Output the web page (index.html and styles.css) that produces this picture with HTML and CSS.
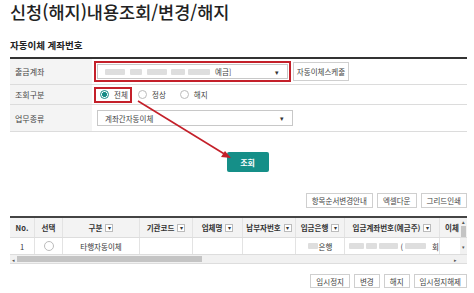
FILE: index.html
```html
<!DOCTYPE html>
<html lang="ko">
<head>
  <meta charset="UTF-8">
  <title>신청(해지)내용조회/변경/해지</title>
  <link rel="stylesheet" href="styles.css">
</head>
<body>
  <h1 class="title">신청(해지)내용조회/변경/해지</h1>
  <h2 class="sub">자동이체 계좌번호</h2>

  <div class="form">
    <div class="row r1">
      <div class="lbl">출금계좌</div>
      <div class="val">
        <div class="hl">
          <div class="sel wide">
            <span class="blur b1"></span><span class="blur b2"></span><span class="blur b3"></span><span class="blur b4"></span><span class="blur b5"></span>
            <span class="acc">예금]</span>
            <span class="caret">▾</span>
          </div>
        </div>
        <button class="btn">자동이체스케줄</button>
      </div>
    </div>
    <div class="row r2">
      <div class="lbl">조회구분</div>
      <div class="val">
        <label class="radio hl2"><span class="dot on"></span>전체</label>
        <label class="radio"><span class="dot"></span>정상</label>
        <label class="radio"><span class="dot"></span>해지</label>
      </div>
    </div>
    <div class="row r3">
      <div class="lbl">업무종류</div>
      <div class="val">
        <div class="sel mid">계좌간자동이체<span class="caret">▾</span></div>
      </div>
    </div>
  </div>

  <div class="search"><button class="go">조회</button></div>

  <div class="tools">
    <button class="btn">항목순서변경안내</button>
    <button class="btn">엑셀다운</button>
    <button class="btn">그리드인쇄</button>
  </div>

  <div class="grid">
    <div class="gh">
      <div>No.</div>
      <div>선택</div>
      <div>구분<i class="f">▾</i></div>
      <div>기관코드<i class="f">▾</i></div>
      <div>업체명<i class="f">▾</i></div>
      <div>납부자번호<i class="f">▾</i></div>
      <div>입금은행<i class="f">▾</i></div>
      <div>입금계좌번호(예금주)<i class="f">▾</i></div>
      <div class="cut">이체</div>
      <div class="vs top"><span>▴</span><b></b></div>
    </div>
    <div class="gr">
      <div>1</div>
      <div><span class="dot"></span></div>
      <div>타행자동이체</div>
      <div></div>
      <div></div>
      <div></div>
      <div><span class="blur sm"></span>은행</div>
      <div class="acct"><span class="blur w1"></span><span class="blur w2"></span><span class="blur w3"></span>(<span class="blur w4"></span>회</div>
      <div></div>
      <div class="vs"><span>▾</span></div>
    </div>
    <div class="hs">
      <span class="l">◂</span><div class="thumb"></div><span class="r">▸</span>
    </div>
  </div>

  <div class="tools bottom">
    <button class="btn">임시정지</button>
    <button class="btn">변경</button>
    <button class="btn">해지</button>
    <button class="btn">임시정지해제</button>
  </div>

  <svg class="arrow" width="474" height="293" viewBox="0 0 474 293">
    <line x1="138" y1="101" x2="226" y2="155" stroke="#c4202a" stroke-width="1.6"/>
    <polygon points="231,158 221,157 225,151" fill="#c4202a"/>
  </svg>
</body>
</html>
```

FILE: styles.css
```css
* { margin: 0; padding: 0; box-sizing: border-box; }
body {
  font-family: "Noto Sans CJK KR", "Noto Sans", sans-serif;
  color: #333;
  background: #fff;
  padding: 0 7px 0 10px;
  width: 474px;
  height: 293px;
  overflow: hidden;
  position: relative;
}
.title {
  font-size: 17.5px;
  font-weight: 500;
  line-height: 24px;
  color: #222;
  letter-spacing: 0;
}
.sub {
  margin-top: 14px;
  font-size: 9.5px;
  font-weight: 700;
  line-height: 14px;
  padding-bottom: 5px;
  color: #222;
}
.form {
  border-top: 2px solid #333;
}
.row {
  display: flex;
  border-bottom: 1px solid #dcdcdc;
}
.r1 { height: 26px; }
.r2 { height: 20px; }
.r3 { height: 27px; }
.lbl {
  width: 82px;
  background: #f4f4f4;
  font-size: 8px;
  padding-left: 5px;
  display: flex;
  align-items: center;
  color: #444;
}
.val {
  flex: 1;
  display: flex;
  align-items: center;
  padding-left: 2px;
  gap: 2px;
}
.hl {
  border: 2px solid #c4202a;
  padding: 1px;
  height: 21px;
  display: flex;
  align-items: center;
}
.sel {
  border: 1px solid #c8c8c8;
  height: 15px;
  font-size: 7.5px;
  color: #444;
  display: flex;
  align-items: center;
  padding-left: 7px;
  position: relative;
}
.sel.wide { width: 191px; gap: 1px; }
.sel.mid { width: 196px; margin-left: 3px; height: 16px; }
.caret {
  position: absolute;
  right: 8px;
  font-size: 7px;
  color: #333;
}
.blur {
  display: inline-block;
  height: 6px;
  background: #dedede;
  border-radius: 1px;
}
.b1 { width: 20px; }
.b2 { width: 12px; margin-left: 4px; }
.b3 { width: 20px; margin-left: 4px; }
.b4 { width: 14px; margin-left: 3px; }
.b5 { width: 22px; margin-left: 2px; }
.acc { margin-left: 4px; }
.btn {
  font-family: inherit;
  font-size: 7.5px;
  color: #444;
  background: #fff;
  border: 1px solid #cfcfcf;
  height: 18px;
  padding: 0 5px;
  white-space: nowrap;
}
.r1 .btn { width: 56px; padding: 0 2px; height: 19px; }
.radio {
  display: flex;
  align-items: center;
  font-size: 7.5px;
  color: #444;
  gap: 5px;
  margin-right: 12px;
}
.hl2 {
  border: 2px solid #c4202a;
  height: 16px;
  width: 38px;
  padding-left: 4px;
  margin-right: 4px;
}
.dot {
  display: inline-block;
  width: 9px;
  height: 9px;
  border: 1px solid #bbb;
  border-radius: 50%;
  background: #fff;
}
.dot.on {
  border-color: #178b86;
  background: radial-gradient(circle, #178b86 0 2.2px, #fff 2.6px);
}
.search {
  display: flex;
  justify-content: center;
  padding: 20px 0 21px 18px;
}
.go {
  width: 42px;
  height: 20px;
  background: #158f88;
  color: #fff;
  border: none;
  border-radius: 2px;
  font-family: inherit;
  font-size: 8px;
  font-weight: 700;
}
.tools {
  display: flex;
  justify-content: flex-end;
  gap: 4px;
}
.tools .btn { height: 15px; padding: 0 5px; font-size: 7.5px; }
.grid {
  margin-top: 8px;
  border-top: 2px solid #444;
  border-bottom: 1px solid #ddd;
}
.gh, .gr {
  display: grid;
  grid-template-columns: 25px 28px 77px 53px 50px 53px 49px 95px 20px 7px;
  font-size: 7.5px;
  color: #333;
}
.gh {
  height: 20px;
  background: #f3f3f3;
  font-weight: 700;
  border-bottom: 1px solid #ddd;
}
.gh > div, .gr > div {
  display: flex;
  align-items: center;
  justify-content: center;
  border-right: 1px solid #e3e3e3;
  white-space: nowrap;
  overflow: hidden;
}
.gh > div.cut { justify-content: flex-start; padding-left: 5px; border-right: none; }
.gr > div:nth-child(9) { border-right: none; }
.gh .vs, .gr .vs {
  border-right: none;
  background: #f1f1f1;
  flex-direction: column;
  justify-content: flex-start;
  font-size: 5px;
  color: #555;
}
.gh .vs b {
  display: block;
  width: 5px;
  height: 11px;
  background: #c4c4c4;
  margin-top: 1px;
}
.gr .vs { justify-content: center; }
.f {
  font-style: normal;
  font-weight: 400;
  font-size: 6px;
  display: inline-flex;
  align-items: center;
  justify-content: center;
  width: 8px;
  height: 8px;
  border: 1px solid #bbb;
  background: #fff;
  margin-left: 3px;
}
.gr {
  height: 17px;
  border-bottom: 1px solid #ddd;
}
.gr .dot { width: 10px; height: 10px; }
.blur.sm { width: 10px; margin-right: 1px; }
.gr .acct { justify-content: flex-start; padding-left: 4px; gap: 2px; }
.w1 { width: 18px; }
.w2 { width: 14px; }
.w3 { width: 24px; }
.w4 { width: 26px; margin-right: 4px; }
.hs {
  height: 8px;
  display: flex;
  align-items: center;
  font-size: 5px;
  color: #555;
  background: #f1f1f1;
}
.hs .l { width: 7px; text-align: center; }
.hs .thumb {
  width: 185px;
  height: 6px;
  background: #c4c4c4;
}
.hs .r { margin-left: auto; width: 24px; text-align: center; }
.tools.bottom { margin-top: 10px; }
.tools.bottom .btn { height: 14px; }
.arrow {
  position: absolute;
  top: 0;
  left: 0;
  pointer-events: none;
}
```
